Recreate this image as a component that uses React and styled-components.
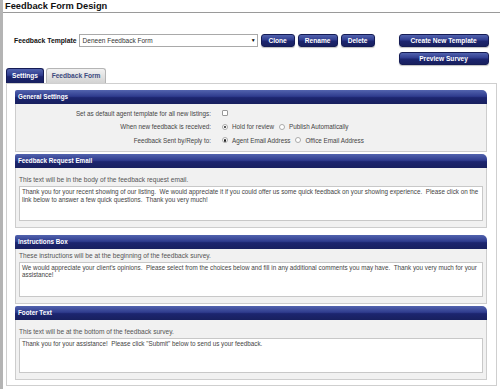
import React from "react";
import styled, { createGlobalStyle } from "styled-components";

const Global = createGlobalStyle`
  html, body { margin: 0; padding: 0; background: #fff; }
  body { font-family: "Liberation Sans", Arial, sans-serif; color: #333; }
  * { box-sizing: border-box; }
`;

const navy = "linear-gradient(#5263ae 0%, #2f3c8e 45%, #1c256f 55%, #18205f 100%)";

const Page = styled.div`
  border-left: 3px solid #b4b4b4;
  min-height: 389px;
  width: 500px;
  overflow: hidden;
`;

const Title = styled.h1`
  margin: 0;
  padding: 1px 0 0 2px;
  height: 13px;
  font-size: 9.3px;
  line-height: 11px;
  font-weight: bold;
  color: #111;
  border-bottom: 1px solid #9a9a9a;
`;

const TemplateBar = styled.div`
  display: flex;
  align-items: flex-start;
  margin-top: 21px;
  padding-left: 11px;
`;

const Label = styled.span`
  font-size: 6.8px;
  font-weight: bold;
  color: #111;
  line-height: 13px;
  margin-right: 2px;
  white-space: nowrap;
`;

const Select = styled.div`
  position: relative;
  width: 179px;
  height: 13px;
  border: 1px solid #a9a9a9;
  background: #fff;
  font-size: 6.5px;
  line-height: 11px;
  padding-left: 3px;
  color: #333;
  margin-right: 3px;
`;

const Arrow = styled.span`
  position: absolute;
  right: 1px;
  top: 0;
  font-size: 5px;
  line-height: 11px;
  color: #000;
`;

const Btn = styled.button`
  height: 13px;
  width: ${(p) => p.w}px;
  padding: 0;
  border: 1px solid #151c55;
  border-radius: 3px;
  background: ${navy};
  color: #fff;
  font-family: "Liberation Sans", Arial, sans-serif;
  font-weight: bold;
  font-size: 6.6px;
  line-height: 11px;
  margin-right: ${(p) => p.mr || 0}px;
  box-shadow: 0 1px 1px rgba(0,0,0,0.25);
`;

const RightStack = styled.div`
  display: flex;
  flex-direction: column;
  gap: 5px;
  margin-left: 24px;
`;

const Tabs = styled.div`
  display: flex;
  gap: 2px;
  margin: 3px 0 0 3px;
`;

const Tab = styled.div`
  height: 15px;
  width: ${(p) => p.w}px;
  border-radius: 3px 3px 0 0;
  border: 1px solid ${(p) => (p.active ? "#151c55" : "#b5b5b5")};
  border-bottom: none;
  background: ${(p) => (p.active ? navy : "linear-gradient(#f2f2f2, #d2d2d2)")};
  color: ${(p) => (p.active ? "#fff" : "#3d4a7e")};
  font-size: 6.6px;
  font-weight: bold;
  line-height: 14px;
  text-align: center;
`;

const Panel = styled.div`
  margin-left: 3px;
  width: 491px;
  height: 303px;
  border: 1px solid #cfcfcf;
  padding: 5.5px 9px 0 8px;
  display: flex;
  flex-direction: column;
  gap: 2px;
`;

const Section = styled.div`
  margin-bottom: ${(p) => p.mb || 0}px;
`;

const SectionHead = styled.div`
  height: 14px;
  border-radius: 2px 5px 0 0;
  background: ${navy};
  color: #fff;
  font-size: 6.3px;
  font-weight: bold;
  line-height: 14px;
  padding-left: 3px;
`;

const SectionBody = styled.div`
  background: #f1f1f1;
  border: 1px solid #cdcdcd;
  border-top: none;
  padding: ${(p) => p.pad};
`;

const SettingRow = styled.div`
  display: grid;
  grid-template-columns: 195px 1fr;
  column-gap: 11px;
  align-items: center;
  height: 13.5px;
  font-size: 6.3px;
  color: #444;
`;

const RowLabel = styled.span`
  text-align: right;
  white-space: nowrap;
`;

const Controls = styled.span`
  display: flex;
  align-items: center;
  white-space: nowrap;
`;

const Check = styled.span`
  width: 6px;
  height: 6px;
  border: 1px solid #999;
  border-radius: 1px;
  background: #fff;
  margin-right: 3px;
`;

const Radio = styled.span`
  width: 6px;
  height: 6px;
  border-radius: 50%;
  border: 1px solid #aaa;
  background: #fff;
  margin: 0 4px 0 ${(p) => p.ml || 0}px;
  display: flex;
  align-items: center;
  justify-content: center;
  &::after {
    content: "";
    width: 2.5px;
    height: 2.5px;
    border-radius: 50%;
    background: ${(p) => (p.on ? "#222" : "transparent")};
  }
`;

const Hint = styled.div`
  font-size: 6.6px;
  color: #555;
  line-height: 12px;
`;

const TextBox = styled.div`
  height: 35px;
  border: 1px solid #c8c8c8;
  background: #fff;
  padding: 1px 2px;
  font-size: 6.3px;
  line-height: 7.5px;
  color: #444;
  white-space: pre-wrap;
`;

function TextSection({ title, hint, text, top, mb }) {
  return (
    <Section mb={mb}>
      <SectionHead>{title}</SectionHead>
      <SectionBody pad={`${top}px 3px 6px 3px`}>
        <Hint>{hint}</Hint>
        <TextBox>{text}</TextBox>
      </SectionBody>
    </Section>
  );
}

export default function App() {
  return (
    <>
      <Global />
      <Page>
        <Title>Feedback Form Design</Title>
        <TemplateBar>
          <Label>Feedback Template</Label>
          <Select>
            Deneen Feedback Form
            <Arrow>▼</Arrow>
          </Select>
          <Btn w={34} mr={3}>Clone</Btn>
          <Btn w={40} mr={3}>Rename</Btn>
          <Btn w={34}>Delete</Btn>
          <RightStack>
            <Btn w={90}>Create New Template</Btn>
            <Btn w={90}>Preview Survey</Btn>
          </RightStack>
        </TemplateBar>
        <Tabs>
          <Tab active w={38}>Settings</Tab>
          <Tab w={60}>Feedback Form</Tab>
        </Tabs>
        <Panel>
          <Section>
            <SectionHead>General Settings</SectionHead>
            <SectionBody pad="3px 0 4px 0">
              <SettingRow>
                <RowLabel>Set as default agent template for all new listings:</RowLabel>
                <Controls><Check /></Controls>
              </SettingRow>
              <SettingRow>
                <RowLabel>When new feedback is received:</RowLabel>
                <Controls>
                  <Radio on />Hold for review
                  <Radio ml={5} />Publish Automatically
                </Controls>
              </SettingRow>
              <SettingRow>
                <RowLabel>Feedback Sent by/Reply to:</RowLabel>
                <Controls>
                  <Radio on />Agent Email Address
                  <Radio ml={5} />Office Email Address
                </Controls>
              </SettingRow>
            </SectionBody>
          </Section>
          <TextSection
            top={6}
            mb={5}
            title="Feedback Request Email"
            hint="This text will be in the body of the feedback request email."
            text={"Thank you for your recent showing of our listing.  We would appreciate it if you could offer us some quick feedback on your showing experience.  Please click on the link below to answer a few quick questions.  Thank you very much!"}
          />
          <TextSection
            top={0.5}
            title="Instructions Box"
            hint="These instructions will be at the beginning of the feedback survey."
            text={"We would appreciate your client's opinions.  Please select from the choices below and fill in any additional comments you may have.  Thank you very much for your assistance!"}
          />
          <TextSection
            top={6}
            title="Footer Text"
            hint="This text will be at the bottom of the feedback survey."
            text={"Thank you for your assistance!  Please click \"Submit\" below to send us your feedback."}
          />
        </Panel>
      </Page>
    </>
  );
}
